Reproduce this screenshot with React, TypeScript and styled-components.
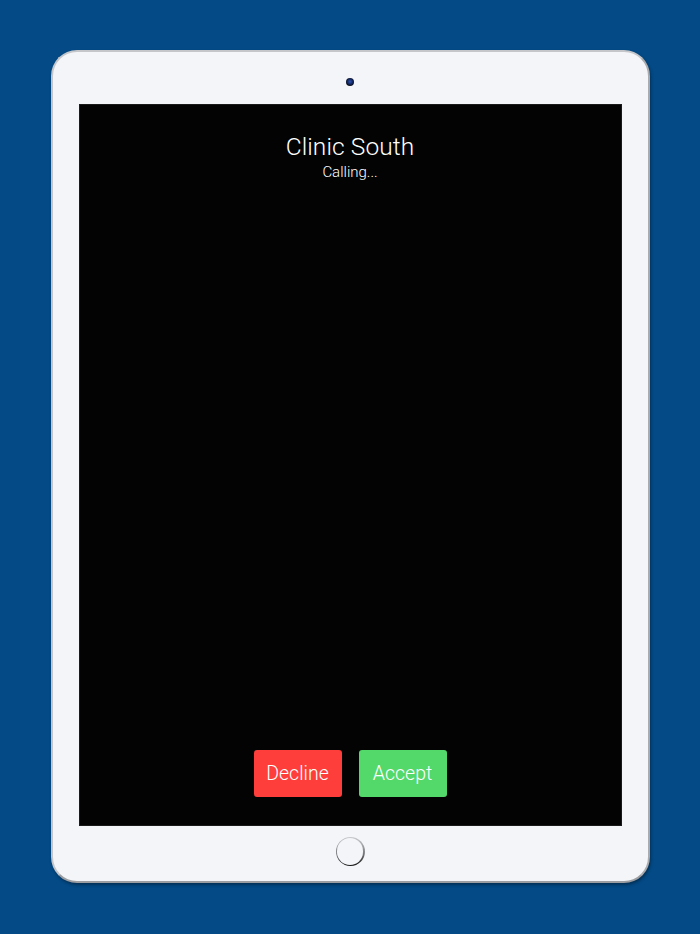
import React from 'react';
import styled, { createGlobalStyle } from 'styled-components';

const GlobalStyle = createGlobalStyle`
  html, body {
    margin: 0;
    padding: 0;
    height: 100%;
  }
  body {
    background: #034a86;
    font-family: Roboto, 'Liberation Sans', sans-serif;
  }
  #root {
    height: 100%;
  }
`;

const Page = styled.div`
  width: 700px;
  height: 934px;
  display: flex;
  align-items: center;
  justify-content: center;
  background: #034a86;
`;

const Device = styled.div`
  box-sizing: border-box;
  width: 599px;
  height: 833px;
  margin-top: -1px;
  background: #f4f5f8;
  border-radius: 26px;
  border: 2px solid #c4c6ca;
  border-right-color: #a9abaf;
  border-bottom-color: #9c9ea2;
  box-shadow: 1px 2px 3px rgba(0, 0, 0, 0.35);
  display: flex;
  flex-direction: column;
  align-items: center;
`;

const TopBezel = styled.div`
  height: 52px;
  display: flex;
  align-items: center;
  justify-content: center;
`;

const Camera = styled.div`
  width: 8px;
  height: 8px;
  margin-top: 8px;
  border-radius: 50%;
  background: radial-gradient(circle at 50% 45%, #2d52b8 0%, #142a66 40%, #06080f 75%, #23262c 100%);
`;

const Screen = styled.div`
  box-sizing: border-box;
  width: 543px;
  height: 722px;
  background: #030303;
  border: 1px solid #1a1a1a;
  display: flex;
  flex-direction: column;
  align-items: center;
  justify-content: space-between;
  padding: 27px 0 28px;
  color: #fff;
`;

const Header = styled.div`
  display: flex;
  flex-direction: column;
  align-items: center;
`;

const Name = styled.div`
  font-size: 24.5px;
  font-weight: 300;
  line-height: 30px;
  letter-spacing: 0.1px;
`;

const Status = styled.div`
  font-size: 15px;
  font-weight: 300;
  line-height: 18px;
  margin-top: 1px;
`;

const Actions = styled.div`
  display: flex;
  gap: 17px;
`;

const CallButton = styled.button<{ tone: 'decline' | 'accept' }>`
  width: 88px;
  height: 47px;
  border: none;
  border-radius: 3px;
  background: ${({ tone }) => (tone === 'decline' ? '#fd3e3b' : '#53d86a')};
  color: #fff;
  font-family: Roboto, 'Liberation Sans', sans-serif;
  font-size: 19.5px;
  font-weight: 300;
  padding: 0;
  cursor: pointer;
`;

const BottomBezel = styled.div`
  flex: 1;
  display: flex;
  align-items: center;
  justify-content: center;
`;

const HomeRing = styled.div`
  width: 29px;
  height: 29px;
  border-radius: 50%;
  background: linear-gradient(to bottom, #c9cacd 0%, #7d7e81 55%, #141416 100%);
  display: flex;
  align-items: center;
  justify-content: center;
  margin-bottom: 4px;
`;

const HomeFace = styled.div`
  width: 26.5px;
  height: 26.5px;
  border-radius: 50%;
  background: #f4f5f8;
`;

export default function App() {
  return (
    <>
      <GlobalStyle />
      <Page>
        <Device>
          <TopBezel>
            <Camera />
          </TopBezel>
          <Screen>
            <Header>
              <Name>Clinic South</Name>
              <Status>Calling...</Status>
            </Header>
            <Actions>
              <CallButton tone="decline">Decline</CallButton>
              <CallButton tone="accept">Accept</CallButton>
            </Actions>
          </Screen>
          <BottomBezel>
            <HomeRing>
              <HomeFace />
            </HomeRing>
          </BottomBezel>
        </Device>
      </Page>
    </>
  );
}
